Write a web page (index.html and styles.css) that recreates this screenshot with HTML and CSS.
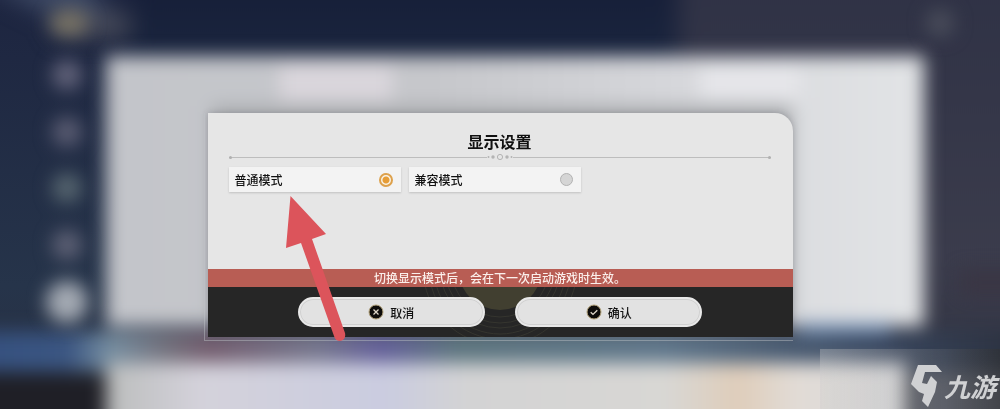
FILE: index.html
```html
<!DOCTYPE html>
<html lang="zh-CN">
<head>
<meta charset="utf-8">
<meta name="viewport" content="width=device-width, initial-scale=1">
<title>显示设置</title>
<link rel="stylesheet" href="styles.css">
</head>
<body>
<svg class="backdrop" viewBox="0 0 1000 409" preserveAspectRatio="none" aria-hidden="true">
  <defs>
    <filter id="soft" x="-20%" y="-20%" width="140%" height="140%" color-interpolation-filters="sRGB"><feGaussianBlur stdDeviation="9"/></filter>
    <filter id="softer" x="-40%" y="-80%" width="180%" height="260%" color-interpolation-filters="sRGB"><feGaussianBlur stdDeviation="12"/></filter>
    <linearGradient id="left" x1="0" y1="0" x2="0" y2="1"><stop offset="0" stop-color="#1d2540"/><stop offset=".7" stop-color="#26344a"/><stop offset="1" stop-color="#2a3042"/></linearGradient>
    <linearGradient id="top" x1="0" y1="0" x2="0" y2="1"><stop offset="0" stop-color="#151c36"/><stop offset="1" stop-color="#1b2740"/></linearGradient>
    <linearGradient id="right" x1="0" y1="0" x2="0" y2="1"><stop offset="0" stop-color="#2e3145"/><stop offset=".6" stop-color="#3b3c4c"/><stop offset="1" stop-color="#2b303d"/></linearGradient>
    <linearGradient id="panel" x1="0" y1="0" x2="1" y2="0"><stop offset="0" stop-color="#c3c5ca"/><stop offset=".4" stop-color="#c6c7cb"/><stop offset=".7" stop-color="#d6d7db"/><stop offset="1" stop-color="#e2e4e6"/></linearGradient>
    <linearGradient id="streak" x1="0" y1="0" x2="1" y2="0"><stop offset="0" stop-color="#34507f"/><stop offset=".1" stop-color="#3b5682"/><stop offset=".14" stop-color="#7890a2"/><stop offset=".19" stop-color="#75747f"/><stop offset=".23" stop-color="#755f70"/><stop offset=".33" stop-color="#77788e"/><stop offset=".39" stop-color="#65619a"/><stop offset=".46" stop-color="#5f7780"/><stop offset=".65" stop-color="#61788c"/><stop offset=".85" stop-color="#39475f"/><stop offset="1" stop-color="#292e3b"/></linearGradient>
    <linearGradient id="low" x1="0" y1="0" x2="1" y2="0"><stop offset="0" stop-color="#bbbdbc"/><stop offset=".12" stop-color="#d4d2db"/><stop offset=".35" stop-color="#cacce0"/><stop offset=".45" stop-color="#d3d3d4"/><stop offset=".7" stop-color="#d8d7d4"/><stop offset=".79" stop-color="#dfcdba"/><stop offset=".86" stop-color="#e1dbd5"/><stop offset="1" stop-color="#dcdde0"/></linearGradient>
  </defs>
  <rect width="1000" height="409" fill="url(#left)"/>
  <g filter="url(#softer)">
    <rect x="130" y="-40" width="560" height="120" fill="url(#top)"/>
    <rect x="678" y="-40" width="370" height="500" fill="url(#right)"/>
    <path d="M-20-20H85L115 25 60 20z" fill="#3f4b66"/>
    <rect x="55" y="15" width="75" height="20" fill="#4e505c"/>
  </g>
  <g filter="url(#soft)">
    <rect x="-40" y="350" width="1080" height="90" fill="#1f1f26"/>
    <rect x="106" y="56" width="818" height="270" fill="url(#panel)"/>
    <rect x="280" y="65" width="112" height="36" fill="#dad6dc"/>
    <rect x="700" y="66" width="100" height="32" fill="#e6e6ea"/>
    <rect x="212" y="106" width="580" height="210" fill="#a9abae"/>
    <rect x="-40" y="332" width="1080" height="40" fill="url(#streak)"/>
    <rect x="106" y="363" width="800" height="90" fill="url(#low)"/>
    <rect x="912" y="372" width="120" height="80" fill="#535762"/>
    <rect x="960" y="270" width="70" height="25" fill="#3a3644"/>
    <rect x="800" y="323" width="90" height="11" fill="#748eb1"/>
  </g>
  <g filter="url(#soft)">
    <ellipse cx="69" cy="23" rx="19" ry="12" fill="#7a7465"/>
    <circle cx="67" cy="75" r="15" fill="#62637a"/>
    <circle cx="67" cy="132" r="15" fill="#5a5c72"/>
    <circle cx="67" cy="188" r="15" fill="#56656f"/>
    <circle cx="67" cy="245" r="15" fill="#5e6175"/>
    <circle cx="67" cy="302" r="21" fill="#a4aab3"/>
    <circle cx="940" cy="23" r="14" fill="#494c5a"/>
  </g>
</svg>

<main class="stage">
  <form class="dialog">
    <div class="dialog-body">
      <h1 class="title">显示设置</h1>
      <div class="divider" aria-hidden="true">
        <span class="rule rule-start"></span>
        <svg class="divider-mark" viewBox="0 0 26 8"><g fill="#b4b4b4"><circle cx="1.5" cy="4" r="1"/><circle cx="6" cy="4" r="1.7"/><circle cx="20" cy="4" r="1.7"/><circle cx="24.500" cy="4" r="1"/></g><circle cx="13" cy="4" r="2.600" fill="none" stroke="#b4b4b4"/></svg>
        <span class="rule rule-end"></span>
      </div>
      <div class="options" role="radiogroup" aria-label="显示设置">
        <label class="option">普通模式<input class="radio" type="radio" name="mode" value="normal" checked></label>
        <label class="option">兼容模式<input class="radio" type="radio" name="mode" value="compat"></label>
      </div>
    </div>
    <p class="notice">切换显示模式后，会在下一次启动游戏时生效。</p>
    <div class="actions">
      <svg class="rings" viewBox="0 0 160 50" aria-hidden="true">
        <circle cx="80" cy="-19" r="42" fill="#413f30"/>
        <g fill="none" stroke="#35352f"><circle cx="80" cy="-19" r="49"/><circle cx="80" cy="-19" r="55"/><circle cx="80" cy="-19" r="60"/><circle cx="80" cy="-19" r="66"/><circle cx="80" cy="-19" r="71"/><circle cx="80" cy="-19" r="77"/></g>
      </svg>
      <button class="button" type="button">
        <svg class="icon" viewBox="0 0 16 16" aria-hidden="true"><circle cx="8" cy="8" r="7" fill="#0d0c0a" stroke="#b5a47b"/><path d="M5.500 5.500l5 5m0-5l-5 5" stroke="#ddd6c8" stroke-width="1.300"/></svg>
        取消
      </button>
      <button class="button" type="button">
        <svg class="icon" viewBox="0 0 16 16" aria-hidden="true"><circle cx="8" cy="8" r="7" fill="#0d0c0a" stroke="#b5a47b"/><path d="M4.700 8.200l2.300 2.200 4.300-4.200" fill="none" stroke="#ddd6c8" stroke-width="1.400"/></svg>
        确认
      </button>
    </div>
    <svg class="arrow" viewBox="0 0 62 148" aria-hidden="true"><path d="M5.500 1L41 39 27 44 60 138Q61 143 58 145 51 148 49 141L16 48 1 53z" fill="#dc545b"/></svg>
  </form>
</main>

<div class="watermark">
  <svg class="watermark-logo" viewBox="0 0 34 44" aria-hidden="true"><path d="M8 1H26L32 8H15L12 19 17 20 21 12 27 18 25 28 18 43 12 37 14 30 9 28 1 20z" fill="#d0d1d3"/></svg>
  <span class="watermark-text">九游</span>
</div>
</body>
</html>
```
FILE: styles.css
```css
* {
  box-sizing: border-box;
}

body {
  margin: 0;
  min-height: 100vh;
  overflow: hidden;
  background: #262f45;
  color: #111;
  font-family: "Noto Sans CJK SC", "Noto Sans", sans-serif;
  font-size: 12px;
  font-weight: 500;
}

.backdrop {
  position: fixed;
  inset: 0;
  width: 100%;
  height: 100%;
}

.stage {
  position: relative;
  display: flex;
  justify-content: center;
  padding-top: 113px;
}

.dialog {
  position: relative;
  width: 58.5%;
  border-radius: 0 18px 0 0;
  background: #e6e6e6;
  box-shadow: 0 0 6px rgba(60, 60, 70, 0.25);
}

.dialog::before {
  content: "";
  position: absolute;
  inset: 0 0 -4px -4px;
  border: solid rgba(190, 195, 200, 0.45);
  border-width: 0 0 1px 1px;
}

.dialog-body {
  padding: 16px 22px 77px 21px;
}

.title {
  margin: 0;
  font-size: 16px;
  font-weight: 700;
  line-height: 24px;
  text-align: center;
}

.divider {
  display: flex;
  align-items: center;
}

.rule {
  position: relative;
  flex: 1;
  height: 1px;
  background: #bdbdbd;
}

.rule::after {
  content: "";
  position: absolute;
  top: -1px;
  width: 3px;
  height: 3px;
  border-radius: 50%;
  background: #b0b0b0;
}

.rule-start::after {
  left: 0;
}

.rule-end::after {
  right: 0;
}

.divider-mark {
  width: 26px;
  height: 8px;
}

.options {
  display: flex;
  gap: 8px;
  padding-top: 6px;
}

.option {
  display: flex;
  flex: 0 1 172px;
  align-items: center;
  justify-content: space-between;
  padding: 0 8px 0 6px;
  background: #f3f3f3;
  box-shadow: 0 1px 2px rgba(0, 0, 0, 0.16);
  line-height: 25px;
}

.radio {
  appearance: none;
  width: 13px;
  height: 13px;
  margin: 0;
  border: 1px solid #b2b2b2;
  border-radius: 50%;
  background: #d5d5d5;
}

.radio:checked {
  width: 14px;
  height: 14px;
  border: 2px solid #dda14c;
  background: radial-gradient(circle, #e69d37 0 3px, #faf3e7 4px);
}

.notice {
  margin: 0;
  background: #b85d54;
  color: #fbefeb;
  font-size: 12px;
  line-height: 18px;
  text-align: center;
}

.actions {
  position: relative;
  display: flex;
  gap: 30px;
  padding: 10px 15.4%;
  background: #262626;
}

.rings {
  position: absolute;
  top: 0;
  left: calc(50% - 80px);
  width: 160px;
  height: 50px;
}

.button {
  position: relative;
  display: flex;
  flex: 1;
  align-items: center;
  justify-content: center;
  gap: 6px;
  height: 30px;
  padding: 0;
  border: 2px solid #e8e8e8;
  border-radius: 15px;
  background: #e2e2e2;
  box-shadow: inset 0 0 0 1px #d0d0d0;
  color: #111;
  font: inherit;
}

.icon {
  width: 16px;
  height: 16px;
}

.arrow {
  position: absolute;
  top: 82px;
  left: 77px;
  width: 62px;
  height: 148px;
}

.watermark {
  position: fixed;
  right: 0;
  bottom: 0;
  display: flex;
  align-items: center;
  justify-content: flex-end;
  width: 180px;
  height: 60px;
  padding: 14px 4px 0 0;
  background: linear-gradient(90deg, rgba(205, 205, 205, 0.35), rgba(130, 130, 130, 0.2) 70%, rgba(50, 50, 50, 0.5));
}

.watermark-logo {
  width: 34px;
  height: 44px;
}

.watermark-text {
  color: #d0d1d3;
  font-size: 26px;
  font-style: italic;
  font-weight: 700;
  line-height: 40px;
}
```
